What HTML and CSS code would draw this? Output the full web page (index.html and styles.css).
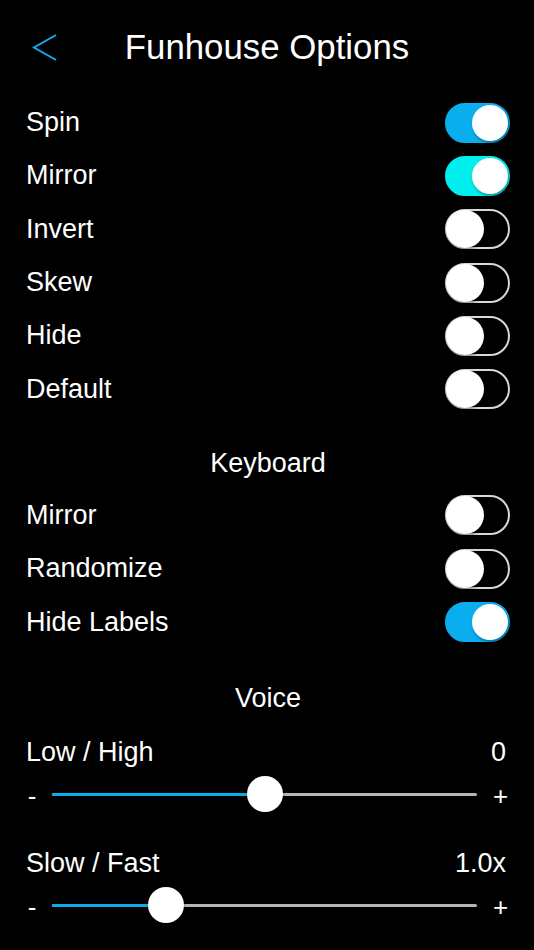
FILE: index.html
```html
<!DOCTYPE html>
<html lang="en">
<head>
  <meta charset="UTF-8">
  <title>Funhouse Options</title>
  <link rel="stylesheet" href="styles.css">
</head>
<body>
  <header class="topbar">
    <div class="back">
      <svg width="28" height="30" viewBox="0 0 28 30">
        <polyline points="24,2 2,14.5 24,27" fill="none" stroke="#10aeee" stroke-width="2"/>
      </svg>
    </div>
    <h1 class="title">Funhouse Options</h1>
    <div></div>
  </header>

  <div class="row"><span>Spin</span><span class="switch on"></span></div>
  <div class="row"><span>Mirror</span><span class="switch on cyan"></span></div>
  <div class="row"><span>Invert</span><span class="switch"></span></div>
  <div class="row"><span>Skew</span><span class="switch"></span></div>
  <div class="row"><span>Hide</span><span class="switch"></span></div>
  <div class="row"><span>Default</span><span class="switch"></span></div>

  <h2 class="section">Keyboard</h2>

  <div class="row"><span>Mirror</span><span class="switch"></span></div>
  <div class="row"><span>Randomize</span><span class="switch"></span></div>
  <div class="row"><span>Hide Labels</span><span class="switch on"></span></div>

  <h2 class="section voice">Voice</h2>

  <div class="slider-label first"><span>Low / High</span><span>0</span></div>
  <div class="slider-row">
    <span class="sign">-</span>
    <div class="track">
      <div class="fill" style="width: 50%"></div>
      <div class="thumb" style="left: 50%"></div>
    </div>
    <span class="sign plus">+</span>
  </div>

  <div class="slider-label"><span>Slow / Fast</span><span>1.0x</span></div>
  <div class="slider-row">
    <span class="sign">-</span>
    <div class="track">
      <div class="fill" style="width: 26.8%"></div>
      <div class="thumb" style="left: 26.8%"></div>
    </div>
    <span class="sign plus">+</span>
  </div>
</body>
</html>
```

FILE: styles.css
```css
body {
  margin: 0;
  padding: 0 24px 0 26px;
  background: #000;
  color: #fff;
  font-family: "Liberation Sans", Arial, sans-serif;
  font-size: 27px;
}
.topbar {
  height: 96px;
  display: grid;
  grid-template-columns: 1fr auto 1fr;
  align-items: center;
  margin: 0 -24px 0 -26px;
}
.back {
  padding-left: 32px;
  height: 30px;
}
.back svg { display: block; }
.title {
  margin: 0;
  font-size: 34.8px;
  font-weight: normal;
  padding-bottom: 2px;
}
.row {
  height: 53.3px;
  display: flex;
  align-items: center;
  justify-content: space-between;
}
.switch {
  position: relative;
  width: 65px;
  height: 40px;
  box-sizing: border-box;
  border-radius: 20px;
  border: 2px solid #d8d8d8;
  background: #000;
}
.switch::after {
  content: "";
  position: absolute;
  top: -1px;
  left: -1px;
  width: 38px;
  height: 38px;
  border-radius: 50%;
  background: #fff;
  box-shadow: 1px 2px 3px rgba(0, 0, 0, 0.35);
}
.switch.on {
  border-color: #0aaeee;
  background: #0aaeee;
}
.switch.on.cyan {
  border-color: #00eeee;
  background: #00eeee;
}
.switch.on::after {
  top: 0;
  left: auto;
  right: 0;
  width: 36px;
  height: 36px;
}
.section {
  margin: 0;
  padding: 33px 0 12px;
  line-height: 28px;
  font-size: 27px;
  font-weight: normal;
  text-align: center;
}
.section.voice {
  padding-top: 35px;
  padding-bottom: 10px;
}
.slider-label {
  display: flex;
  justify-content: space-between;
  line-height: 30px;
  margin-top: 25px;
  padding-right: 4px;
}
.slider-label.first { margin-top: 15px; }
.slider-row {
  height: 56px;
  display: flex;
  align-items: center;
  gap: 14px;
  padding-right: 5px;
}
.sign {
  width: 12px;
  font-size: 26px;
  text-align: center;
  padding-top: 4px;
}
.sign.plus { margin-left: 2px; }
.track {
  position: relative;
  flex: 1;
  height: 3px;
  background: #b4b4b4;
  border-radius: 2px;
}
.fill {
  height: 100%;
  background: #0aaeee;
  border-radius: 2px;
}
.thumb {
  position: absolute;
  top: -17px;
  width: 36px;
  height: 36px;
  margin-left: -18px;
  border-radius: 50%;
  background: #fff;
  box-shadow: 0 1px 3px rgba(0, 0, 0, 0.4);
}
```
